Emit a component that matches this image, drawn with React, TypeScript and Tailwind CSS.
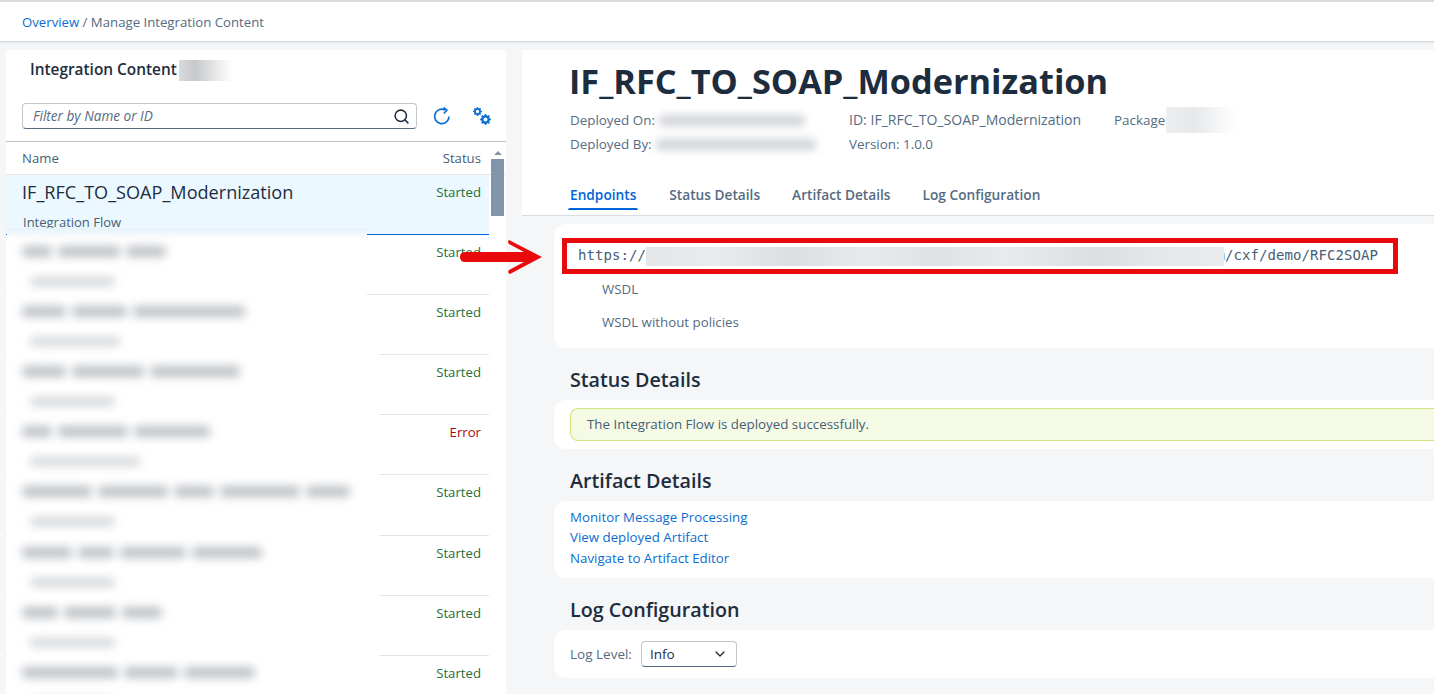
import React from "react";
import { Search, ChevronDown } from "lucide-react";
import { BsGearFill } from "react-icons/bs";

const rows = [
  { status: "Started", sub: 85, segs: [30, 62, 40] },
  { status: "Started", sub: 90, segs: [44, 55, 112] },
  { status: "Started", sub: 85, segs: [44, 72, 90] },
  { status: "Error", sub: 110, segs: [30, 70, 76] },
  { status: "Started", sub: 85, segs: [70, 70, 40, 80, 44] },
  { status: "Started", sub: 85, segs: [50, 36, 66, 70] },
  { status: "Started", sub: 85, segs: [36, 52, 40] },
  { status: "Started", sub: 85, segs: [96, 54, 71] },
];

const font = "font-['Open_Sans','Noto_Sans',sans-serif]";

function Blur({ className, width }: { className: string; width?: number }) {
  return <div className={`rounded-sm ${className}`} style={width ? { width } : undefined} />;
}

function ListRow({ status, index }: { status: string; index: number }) {
  return (
    <div
      className={`flex shrink-0 justify-end px-[8px] pt-[8px] text-[13.2px] leading-[18px] ${index === 4 ? "h-[61px]" : "h-[60px]"} ${index === 7 ? "" : "border-b border-[#e5e5e5]"}`}
    >
      <span className={status === "Error" ? "text-[#aa0808]" : "text-[#256f3a]"}>{status}</span>
    </div>
  );
}

function Section({ title, children, className }: { title: string; children: React.ReactNode; className: string }) {
  return (
    <section>
      <h2 className="ml-[16px] h-[20px] text-[19.7px] font-semibold leading-[20px] text-[#1d2d3e]">{title}</h2>
      <div className={`mt-[10px] rounded-l-xl bg-white ${className}`}>{children}</div>
    </section>
  );
}

export default function App() {
  return (
    <div className={`flex h-[694px] w-[1434px] flex-col overflow-hidden bg-[#f5f6f7] ${font}`}>
      <header className="h-[42px] shrink-0 border-t-2 border-b border-t-[#d9dcdf] border-b-[#d5d9dd] bg-white pl-[22px] pt-[11px] text-[13.2px] leading-[18px] text-[#556b82] shadow-[0_1px_2px_rgba(0,0,0,0.06)]">
        <a className="text-[#0a6ed1]">Overview</a> / Manage Integration Content
      </header>

      <main className="flex min-h-0 flex-1 pl-[6px] pt-[8px]">
        <aside className="relative flex w-[500px] shrink-0 flex-col bg-white">
          <div className="flex items-center pl-[24px] pt-[9px]">
            <h1 className="text-[15.4px] font-semibold leading-[22px] text-[#1d2d3e]">Integration Content</h1>
            <div className="ml-[2px] h-[21px] w-[54px] bg-[linear-gradient(90deg,#d8dadc,#c6c8cb_30%,#e8e9ea_70%,#ffffff)]" />
          </div>
          <div className="flex items-center pl-[16px] pt-[22px]">
            <div className="flex h-[26px] w-[395px] items-center rounded border border-[#bfc6cd] border-b-[#556b82] pl-[10px] pr-[6px]">
              <span className="flex-1 text-[13.6px] italic text-[#556b82]">Filter by Name or ID</span>
              <Search size={17} strokeWidth={2.2} className="text-[#1d2d3e]" />
            </div>
            <svg className="ml-[16px]" width="18" height="18" viewBox="0 0 18 18" fill="none" stroke="#0a6ed1" strokeWidth="1.7">
              <path d="M16 9.5A7.2 7.2 0 1 1 12 3" />
              <path d="M10.5 0.5 13.8 3.2 10.8 6.5" />
            </svg>
            <span className="relative ml-[22px] block h-[18px] w-[18px] text-[#0a6ed1]">
              <BsGearFill size={9} className="absolute left-0 top-0" />
              <BsGearFill size={11} className="absolute bottom-0 right-0" />
            </span>
          </div>
          <div className="mt-[12px] flex h-[34px] shrink-0 items-center justify-between border-t border-b border-t-[#bcc3ca] border-b-[#e5e5e5] pl-[16px] pr-[25px] pt-[1px] text-[13.2px] text-[#475e75]">
            <span>Name</span>
            <span>Status</span>
          </div>
          <div className="flex min-h-0 flex-1">
            <div className="w-[483px] shrink-0">
              <div className="flex h-[60px] justify-between border-b border-[#0064d9] bg-[#ebf8ff] pl-[16px] pr-[8px]">
                <div>
                  <div className="pt-[6px] text-[18.1px] leading-[22px] text-[#1d2d3e]">IF_RFC_TO_SOAP_Modernization</div>
                  <div className="pl-[1px] pt-[10px] text-[13px] leading-[18px] text-[#475e75]">Integration Flow</div>
                </div>
                <span className="pt-[8px] text-[13.2px] leading-[18px] text-[#256f3a]">Started</span>
              </div>
              <div className="flex flex-col">
                {rows.map((r, i) => (
                  <ListRow key={i} status={r.status} index={i} />
                ))}
              </div>
            </div>
            <div className="ml-[2px] flex w-[13px] flex-col items-center">
              <div className="-mt-[24px] h-0 w-0 border-x-[4px] border-b-[4px] border-x-transparent border-b-[#8497ab]" />
              <div className="mt-[4px] h-[57px] w-[13px] bg-[#8094ab]" />
            </div>
          </div>

          {/* Redaction laid over the list */}
          <div className="absolute bottom-0 left-[1px] top-[178px] w-[372px] overflow-hidden bg-white [clip-path:polygon(0_0,360px_0,360px_67px,100%_67px,100%_100%,0_100%)]">
            <div className="h-[12px] bg-gradient-to-b from-[#e6f2fa] to-white" />
            {rows.map((r, i) => (
              <div key={i} className={`pl-[15px] pt-[6px] ${i === 4 ? "h-[61px]" : "h-[60px]"}`}>
                <div className="flex gap-[6px]">
                  {r.segs.map((s, j) => (
                    <Blur key={j} className="h-[11px] bg-[#bdc1c6] blur-[5px]" width={s} />
                  ))}
                </div>
                <Blur className="ml-[8px] mt-[20px] h-[9px] bg-[#d3d6d9] blur-[5px]" width={r.sub} />
              </div>
            ))}
          </div>
        </aside>

        <div className="ml-[16px] flex min-w-0 flex-1 flex-col">
          <div className="h-[166px] shrink-0 border-b border-[#d9dde1] bg-white pl-[48px]">
            <h1 className="-ml-[1px] pt-[12px] text-[34.3px] font-bold leading-[38px] text-[#1d2d3e]">IF_RFC_TO_SOAP_Modernization</h1>
            <div className="mt-[8px] flex text-[13.4px] leading-[24px] text-[#556b82]">
              <div className="w-[279px]">
                <div className="flex items-center">Deployed On:<Blur className="ml-[4px] h-[11px] w-[146px] bg-[#cfd2d6] blur-[4px]" /></div>
                <div className="flex items-center">Deployed By:<Blur className="ml-[4px] h-[11px] w-[160px] bg-[#cfd2d6] blur-[4px]" /></div>
              </div>
              <div className="w-[265px]">
                <div className="text-[14.05px]">ID: IF_RFC_TO_SOAP_Modernization</div>
                <div>Version: 1.0.0</div>
              </div>
              <div className="flex h-[24px] items-center">Package<div className="ml-[1px] h-[26px] w-[70px] bg-[linear-gradient(90deg,#eceef0,#e6e8ea_40%,#ffffff)]" /></div>
            </div>
            <nav className="mt-[27px] flex gap-[32px] text-[13.7px] font-semibold leading-[24px] text-[#556b82]">
              <span className="relative mr-[1px] h-[19px] text-[#0064d9]">
                Endpoints
                <span className="absolute -inset-x-[2px] -bottom-[8px] h-[2px] rounded-t bg-[#0064d9]" />
              </span>
              <span>Status Details</span>
              <span>Artifact Details</span>
              <span>Log Configuration</span>
            </nav>
          </div>

          <div className="flex flex-col pl-[32px]">
            <div className="mt-[8px] h-[124px] rounded-l-xl bg-white pl-[8px] pt-[14px]">
              <div className="flex h-[36px] w-[836px] items-center border-[5px] border-[#e90b0b] pl-[11px] font-['DejaVu_Sans_Mono',monospace] text-[14px] tracking-[0.07px] text-[#475e75]">
                <span className="mb-[2px]">https://</span>
                <span className="relative z-10 h-[19px] w-[578px] bg-[linear-gradient(90deg,#e4e6e8,#e9ebec_12%,#dcdfe2_25%,#e8eaeb_38%,#dfe2e4_50%,#e8eaeb_62%,#dcdfe2_78%,#e6e8ea_90%,#e9ebec)]" />
                <span className="-ml-[7.5px] mb-[2px]">m/cxf/demo/RFC2SOAP</span>
              </div>
              <div className="-mt-[1px] pl-[40px] text-[13.3px] leading-[33px] text-[#556b82]">
                <div>WSDL</div>
                <div>WSDL without policies</div>
              </div>
            </div>
            <div className="mt-[22px]">
              <Section title="Status Details" className="h-[49px] pl-[16px] pt-[8px]">
                <div className="flex h-[33px] items-center rounded-l-lg border border-r-0 border-[#cee67e] bg-[#f5fae5] pl-[16px] text-[13.35px] text-[#475e75]">
                  The Integration Flow is deployed successfully.
                </div>
              </Section>
            </div>
            <div className="mt-[22px]">
              <Section title="Artifact Details" className="h-[77px] pl-[16px] pt-[6px] text-[13.3px] leading-[20.4px] text-[#0a6ed1]">
                <div>Monitor Message Processing</div>
                <div>View deployed Artifact</div>
                <div>Navigate to Artifact Editor</div>
              </Section>
            </div>
            <div className="mt-[22px]">
              <Section title="Log Configuration" className="flex h-[48px] items-center pl-[16px] text-[13.5px] text-[#556b82]">
                <span>Log Level:</span>
                <div className="ml-[9px] flex h-[26px] w-[96px] items-center justify-between rounded border border-[#bfc6cd] border-b-[#556b82] pl-[8px] pr-[8px] text-[#1d2d3e]">
                  <span>Info</span>
                  <ChevronDown size={16} />
                </div>
              </Section>
            </div>
          </div>
        </div>
      </main>

      <svg className="absolute left-[458px] top-[238px]" width="86" height="38" viewBox="0 0 86 38" fill="#e90b0b">
        <path d="M7 14 H66 L51 6 Q49 3 51 2 L84 19 L52 36 Q49 35 51 32 L66 24 H7 Q2 24 2 19 Q2 14 7 14Z" />
      </svg>
    </div>
  );
}
